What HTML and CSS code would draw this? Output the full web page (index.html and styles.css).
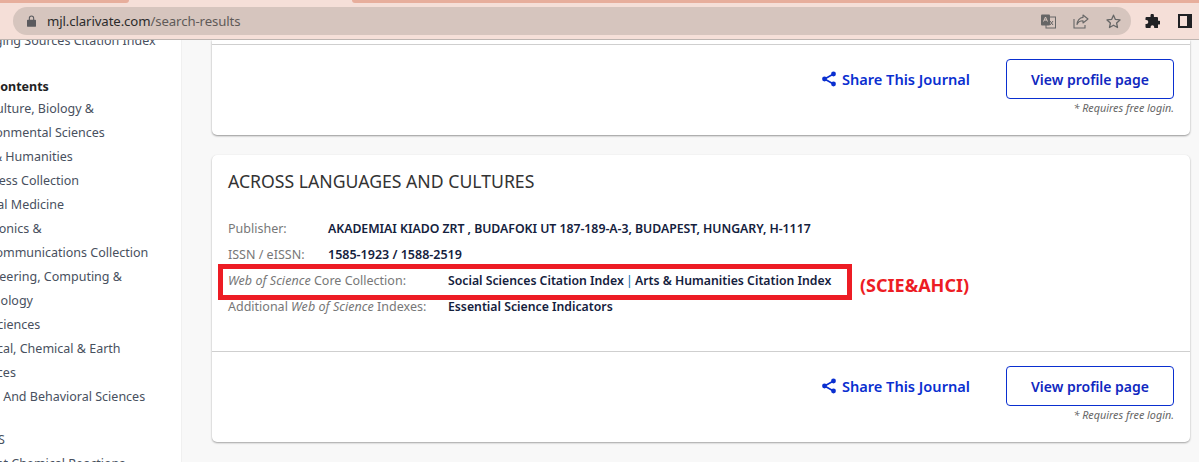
FILE: index.html
```html
<!DOCTYPE html>
<html lang="en">
<head>
<meta charset="utf-8">
<title>Master Journal List</title>
<link rel="stylesheet" href="styles.css">
</head>
<body>
<header class="chrome">
  <div class="tabs"><span class="tab tab-left"></span><span class="tab tab-right"></span></div>
  <div class="toolbar">
    <div class="omnibox">
      <svg class="lock" width="9" height="12" viewBox="0 0 10 13"><path fill="#5a5a5e" d="M1 5h8a1 1 0 0 1 1 1v6a1 1 0 0 1-1 1H1a1 1 0 0 1-1-1V6a1 1 0 0 1 1-1zM2 5V3.400a3 3 0 0 1 6 0V5H6.800V3.400a1.800 1.800 0 0 0-3.600 0V5z"/></svg>
      <span class="url"><span class="host">mjl.clarivate.com</span>/search-results</span>
      <span class="omni-actions">
        <svg width="15" height="15" viewBox="0 0 15 15"><rect x="5" y="3" width="9.500" height="11" fill="none" stroke="#666" stroke-width="1"/><rect x="0" y="0.500" width="9" height="11" rx="1" fill="#666"/><path d="M2.500 7.500 4.500 3l2 4.500M3.200 6h2.600" fill="none" stroke="#d6c5be" stroke-width="1"/><path d="m9 7 3 4M12 7l-3 4" stroke="#666" stroke-width="1"/></svg>
        <svg width="16" height="15" viewBox="0 0 16 15"><path d="M10 1l5 4-5 4V6.700C7 6.700 5 8 4 10.500 4.200 7 6.500 3.600 10 3.400z" fill="none" stroke="#666" stroke-width="1.100" stroke-linejoin="round"/><path d="M1 5v9h11v-3" fill="none" stroke="#666" stroke-width="1.100"/></svg>
        <svg width="15" height="15" viewBox="0 0 15 15"><path d="m7.500 1.200 1.900 4.200 4.600.5-3.400 3.100.9 4.500-4-2.300-4 2.300.9-4.500L1 5.900l4.600-.5z" fill="none" stroke="#666" stroke-width="1.300" stroke-linejoin="round"/></svg>
      </span>
    </div>
    <svg class="ext" width="15" height="15" viewBox="0 0 15 15"><path fill="#202124" d="M5.500 1.500a1.700 1.700 0 0 1 3.400 0V3H12a1 1 0 0 1 1 1v2.800h1a1.800 1.800 0 0 1 0 3.600h-1V14H9.200v-1a1.800 1.800 0 0 0-3.600 0v1H1.500a1 1 0 0 1-1-1v-3h.8a2 2 0 0 0 0-4H.5V4a1 1 0 0 1 1-1h4z"/></svg>
    <svg class="panel" width="14" height="14" viewBox="0 0 14 14"><path fill="#202124" d="M0 0h14v14H0zM2 2v10h7V2z" fill-rule="evenodd"/></svg>
  </div>
</header>
<div class="page">
  <aside class="sidebar">
    <p class="side-item side-clip">Emerging Sources Citation Index</p>
    <h3 class="side-head">Web of Science Contents</h3>
    <ul class="side-list">
      <li>Agriculture, Biology &amp;</li>
      <li>Environmental Sciences</li>
      <li>Arts &amp; Humanities</li>
      <li>Business Collection</li>
      <li>Clinical Medicine</li>
      <li>Electronics &amp;</li>
      <li>Telecommunications Collection</li>
      <li>Engineering, Computing &amp;</li>
      <li>Technology</li>
      <li>Life Sciences</li>
      <li>Physical, Chemical &amp; Earth</li>
      <li>Sciences</li>
      <li>Social And Behavioral Sciences</li>
    </ul>
    <h3 class="side-head side-head-2">DATABASES</h3>
    <p class="side-item side-last">Current Chemical Reactions</p>
  </aside>
  <main class="results">
    <article class="card">
      <div class="card-body card-body-cut"></div>
      <div class="card-foot">
        <a class="share"><svg width="16" height="16" viewBox="0 0 16 16"><path d="M12.500 3 3.500 8l9 5" fill="none" stroke="#0a2fd0" stroke-width="1.600"/><circle cx="12.500" cy="3" r="2.400" fill="#0a2fd0"/><circle cx="3.500" cy="8" r="2.400" fill="#0a2fd0"/><circle cx="12.500" cy="13" r="2.400" fill="#0a2fd0"/></svg>Share This Journal</a>
        <div class="profile"><a class="btn">View profile page</a><small class="note">* Requires free login.</small></div>
      </div>
    </article>
    <article class="card">
      <div class="card-body">
        <h2 class="title">ACROSS LANGUAGES AND CULTURES</h2>
        <dl class="meta">
          <div class="row row-short"><dt>Publisher:</dt><dd class="caps">AKADEMIAI KIADO ZRT , BUDAFOKI UT 187-189-A-3, BUDAPEST, HUNGARY, H-1117</dd></div>
          <div class="row row-short"><dt>ISSN / eISSN:</dt><dd class="issn">1585-1923 / 1588-2519</dd></div>
          <div class="row row-mark"><dt><em>Web of Science</em> Core Collection:</dt><dd>Social Sciences Citation Index <span class="pipe">|</span> Arts &amp; Humanities Citation Index</dd><span class="tag">(SCIE&amp;AHCI)</span></div>
          <div class="row"><dt>Additional <em>Web of Science</em> Indexes:</dt><dd>Essential Science Indicators</dd></div>
        </dl>
      </div>
      <div class="card-foot">
        <a class="share"><svg width="16" height="16" viewBox="0 0 16 16"><path d="M12.500 3 3.500 8l9 5" fill="none" stroke="#0a2fd0" stroke-width="1.600"/><circle cx="12.500" cy="3" r="2.400" fill="#0a2fd0"/><circle cx="3.500" cy="8" r="2.400" fill="#0a2fd0"/><circle cx="12.500" cy="13" r="2.400" fill="#0a2fd0"/></svg>Share This Journal</a>
        <div class="profile"><a class="btn">View profile page</a><small class="note">* Requires free login.</small></div>
      </div>
    </article>
  </main>
</div>
</body>
</html>
```
FILE: styles.css
```css
*, *::before { box-sizing: border-box; }
html, body { margin: 0; height: 100%; overflow: hidden; }
body { background: #f8f8f8; font-family: "Noto Sans", "Open Sans", sans-serif; font-size: 13px; color: #333; }

.chrome { height: 40px; background: #f5dfd8; border-bottom: 1px solid #bdb4b0; }
.tabs { height: 7px; display: flex; justify-content: space-between; }
.tab { height: 3px; background: #e7ae9c; display: block; }
.tab-left { width: 129px; border-radius: 0 0 6px 0; }
.tab-right { width: 847px; border-radius: 0 0 0 6px; }
.toolbar { display: flex; align-items: center; height: 28px; padding-left: 13px; }
.omnibox { width: 1118px; height: 28px; background: #d6c5be; border-radius: 14px; display: flex; align-items: center; padding-left: 14px; }
.lock { flex: none; }
.url { margin-left: 11px; font-size: 13.200px; color: #5f5a58; letter-spacing: -.1px; }
.host { color: #2b2b2b; }
.omni-actions { margin-left: auto; display: flex; align-items: center; gap: 17px; padding-right: 10px; }
.ext { margin-left: 14px; }
.panel { margin-left: 18px; }

.page { display: flex; height: 422px; overflow: hidden; }
.sidebar { flex: none; width: 182px; background: #fff; overflow: hidden; position: relative; border-right: 1px solid #f0f0f0; color: #48505e; }
.side-item { margin: 0 0 0 -36px; white-space: nowrap; line-height: 24px; height: 24px; font-size: 12.500px; }
.side-clip { margin-top: -11px; }
.side-last { margin-top: 0; margin-left: -37px; }
.side-head { margin: 22px 0 0 -104px; font-size: 12.500px; font-weight: 700; color: #222; line-height: 24px; white-space: nowrap; }
.side-head-2 { margin-top: 19px; margin-left: -62px; font-weight: 400; color: #48505e; }
.side-list { list-style: none; margin: -2px 0 0 -34px; padding: 0; }
.side-list li { line-height: 24px; height: 24px; font-size: 12.500px; white-space: nowrap; }

.results { flex: none; width: 978px; margin-left: 30px; display: flex; flex-direction: column; gap: 20px; }
.card { background: #fff; border-radius: 0 0 5px 5px; box-shadow: 0 1px 2px rgba(0,0,0,.4); flex: none; }
.results .card + .card { border-radius: 5px; box-shadow: 0 1px 2px rgba(0,0,0,.35), 0 0 1px rgba(0,0,0,.04); }
.card-body { height: 196px; padding: 15px 16px 16px; }
.card-body-cut { height: 4px; padding: 0; }
.card-foot { height: 91px; border-top: 1px solid #cfcfcf; display: flex; justify-content: flex-end; padding: 14px 16px 0 0; gap: 36px; }
.share { display: flex; align-items: center; gap: 5px; height: 40px; color: #0a2fd0; font-size: 14.600px; font-weight: 600; }
.profile { width: 168px; display: flex; flex-direction: column; align-items: flex-end; }
.btn { width: 100%; height: 40px; display: flex; align-items: center; justify-content: center; border: 1.500px solid #0a2fd0; border-radius: 4px; color: #1028c0; font-size: 14px; font-weight: 600; }
.note { margin-top: 1px; font-size: 10.800px; font-style: italic; color: #666; line-height: 16px; }

.title { margin: 0; font-size: 17.650px; font-weight: 400; line-height: 22px; color: #333; }
.meta { margin: 23px 0 0; }
.row { display: flex; height: 26px; align-items: center; font-size: 12.500px; }
.row dt { width: 220px; flex: none; color: #777; }
.row-short dt { width: 100px; }
.row dd { margin: 0; font-size: 12.250px; font-weight: 600; color: #14213d; white-space: nowrap; }
.row dd.issn { font-size: 12.500px; }
.row dd.caps { font-size: 12.300px; letter-spacing: -.03px; }
.row em { letter-spacing: .05px; }
.pipe { color: #0a6fb0; font-weight: 400; margin: 0 -1px; }
.row-mark { position: relative; }
.row-mark::before { content: ""; position: absolute; left: -10px; top: -3px; width: 634px; height: 36px; border: 5px solid #ed1c24; pointer-events: none; }
.tag { position: absolute; left: 632px; top: 5px; font-size: 18px; font-weight: 700; color: #ed1c24; line-height: 26px; white-space: nowrap; }
```
